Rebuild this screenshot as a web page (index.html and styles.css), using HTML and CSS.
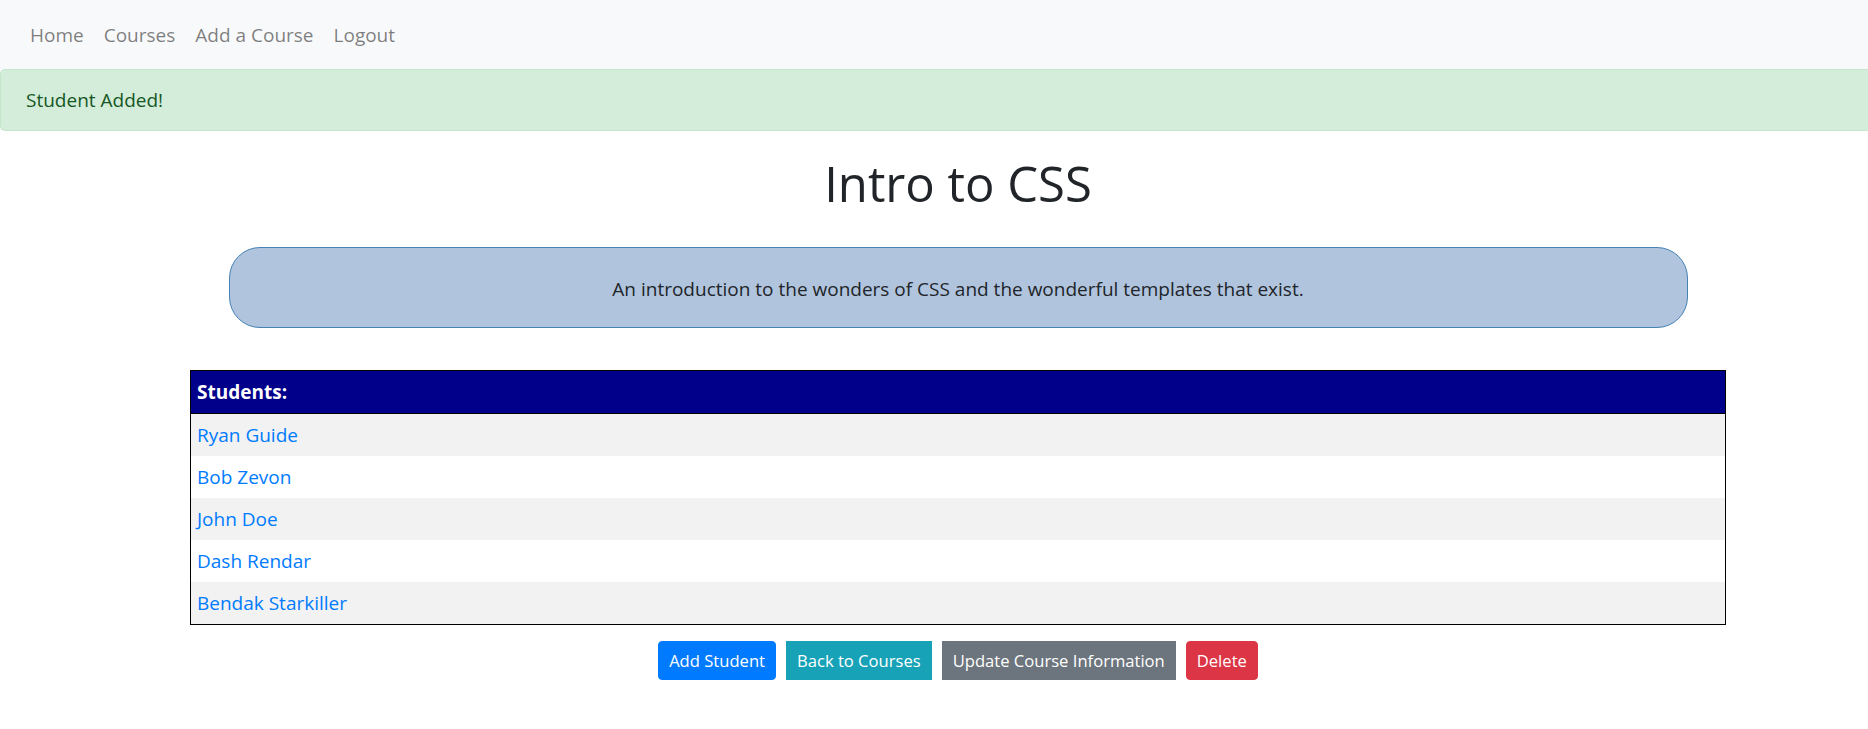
FILE: index.html
```html
<!DOCTYPE html>
<html lang="en">
<head>
<meta charset="utf-8">
<title>Intro to CSS</title>
<link rel="stylesheet" href="styles.css">
</head>
<body>
<nav class="navbar">
  <a class="nav-link" href="#">Home</a>
  <a class="nav-link" href="#">Courses</a>
  <a class="nav-link" href="#">Add a Course</a>
  <a class="nav-link" href="#">Logout</a>
</nav>
<div class="alert">Student Added!</div>
<main class="content">
  <h1 class="title">Intro to CSS</h1>
  <div class="description">An introduction to the wonders of CSS and the wonderful templates that exist.</div>
  <table class="students">
    <thead>
      <tr><th>Students:</th></tr>
    </thead>
    <tbody>
      <tr><td><a href="#">Ryan Guide</a></td></tr>
      <tr><td><a href="#">Bob Zevon</a></td></tr>
      <tr><td><a href="#">John Doe</a></td></tr>
      <tr><td><a href="#">Dash Rendar</a></td></tr>
      <tr><td><a href="#">Bendak Starkiller</a></td></tr>
    </tbody>
  </table>
  <div class="actions">
    <a class="btn btn-primary rounded" href="#">Add Student</a>
    <a class="btn btn-info" href="#">Back to Courses</a>
    <a class="btn btn-secondary" href="#">Update Course Information</a>
    <a class="btn btn-danger rounded" href="#">Delete</a>
  </div>
</main>
</body>
</html>
```
FILE: styles.css
```css
html, body {
  margin: 0;
  padding: 0;
}
body {
  font-family: "Open Sans", "Noto Sans", sans-serif;
  font-size: 19px;
  line-height: 30px;
  color: #212529;
  background: #ffffff;
}
a {
  text-decoration: none;
}

/* Navbar */
.navbar {
  display: flex;
  align-items: center;
  background: #f8f9fa;
  padding: 10px 20px 9px;
}
.nav-link {
  display: block;
  padding: 10px;
  line-height: 30px;
  color: rgba(0, 0, 0, 0.5);
}

/* Alert (its right edge runs past the viewport in the original page) */
.alert {
  background: #d4edda;
  border: 1px solid #c3e6cb;
  border-right: none;
  border-radius: 5px 0 0 5px;
  color: #155724;
  padding: 15px 25px;
  line-height: 30px;
  margin-bottom: 20px;
}

/* Main content */
.content {
  padding-left: 48px;
  display: flex;
  flex-direction: column;
  align-items: center;
}
.title {
  font-size: 49px;
  font-weight: 500;
  line-height: 60px;
  margin: 2px 0 10px;
  color: #212529;
}
.description {
  box-sizing: border-box;
  width: 1459px;
  margin-top: 24px;
  padding: 26px 0 23px;
  background: #b0c4de;
  border: 1px solid #4682b4;
  border-radius: 31px;
  text-align: center;
  line-height: 30px;
  color: #212529;
}

/* Students table */
.students {
  width: 1536px;
  margin-top: 42px;
  border-collapse: collapse;
  border: 1px solid #000000;
}
.students th {
  background: #00008b;
  color: #ffffff;
  font-weight: 700;
  text-align: left;
  padding: 6px 6px;
  line-height: 30px;
  border-bottom: 1px solid #000000;
}
.students td {
  padding: 6px 6px;
  line-height: 30px;
  text-align: left;
}
.students tbody tr:nth-child(odd) {
  background: #f2f2f2;
}
.students tbody tr:nth-child(even) {
  background: #ffffff;
}
.students a {
  color: #007bff;
}

/* Buttons */
.actions {
  display: flex;
  gap: 10px;
  justify-content: center;
  margin-top: 16px;
}
.btn {
  display: inline-block;
  font-size: 16.6px;
  line-height: 27px;
  padding: 5px 10px;
  border: 1px solid transparent;
  color: #ffffff;
}
.btn.rounded {
  border-radius: 4px;
}
.btn-primary {
  background: #007bff;
  border-color: #007bff;
}
.btn-info {
  background: #17a2b8;
  border-color: #17a2b8;
}
.btn-secondary {
  background: #6c757d;
  border-color: #6c757d;
}
.btn-danger {
  background: #dc3545;
  border-color: #dc3545;
}
```
